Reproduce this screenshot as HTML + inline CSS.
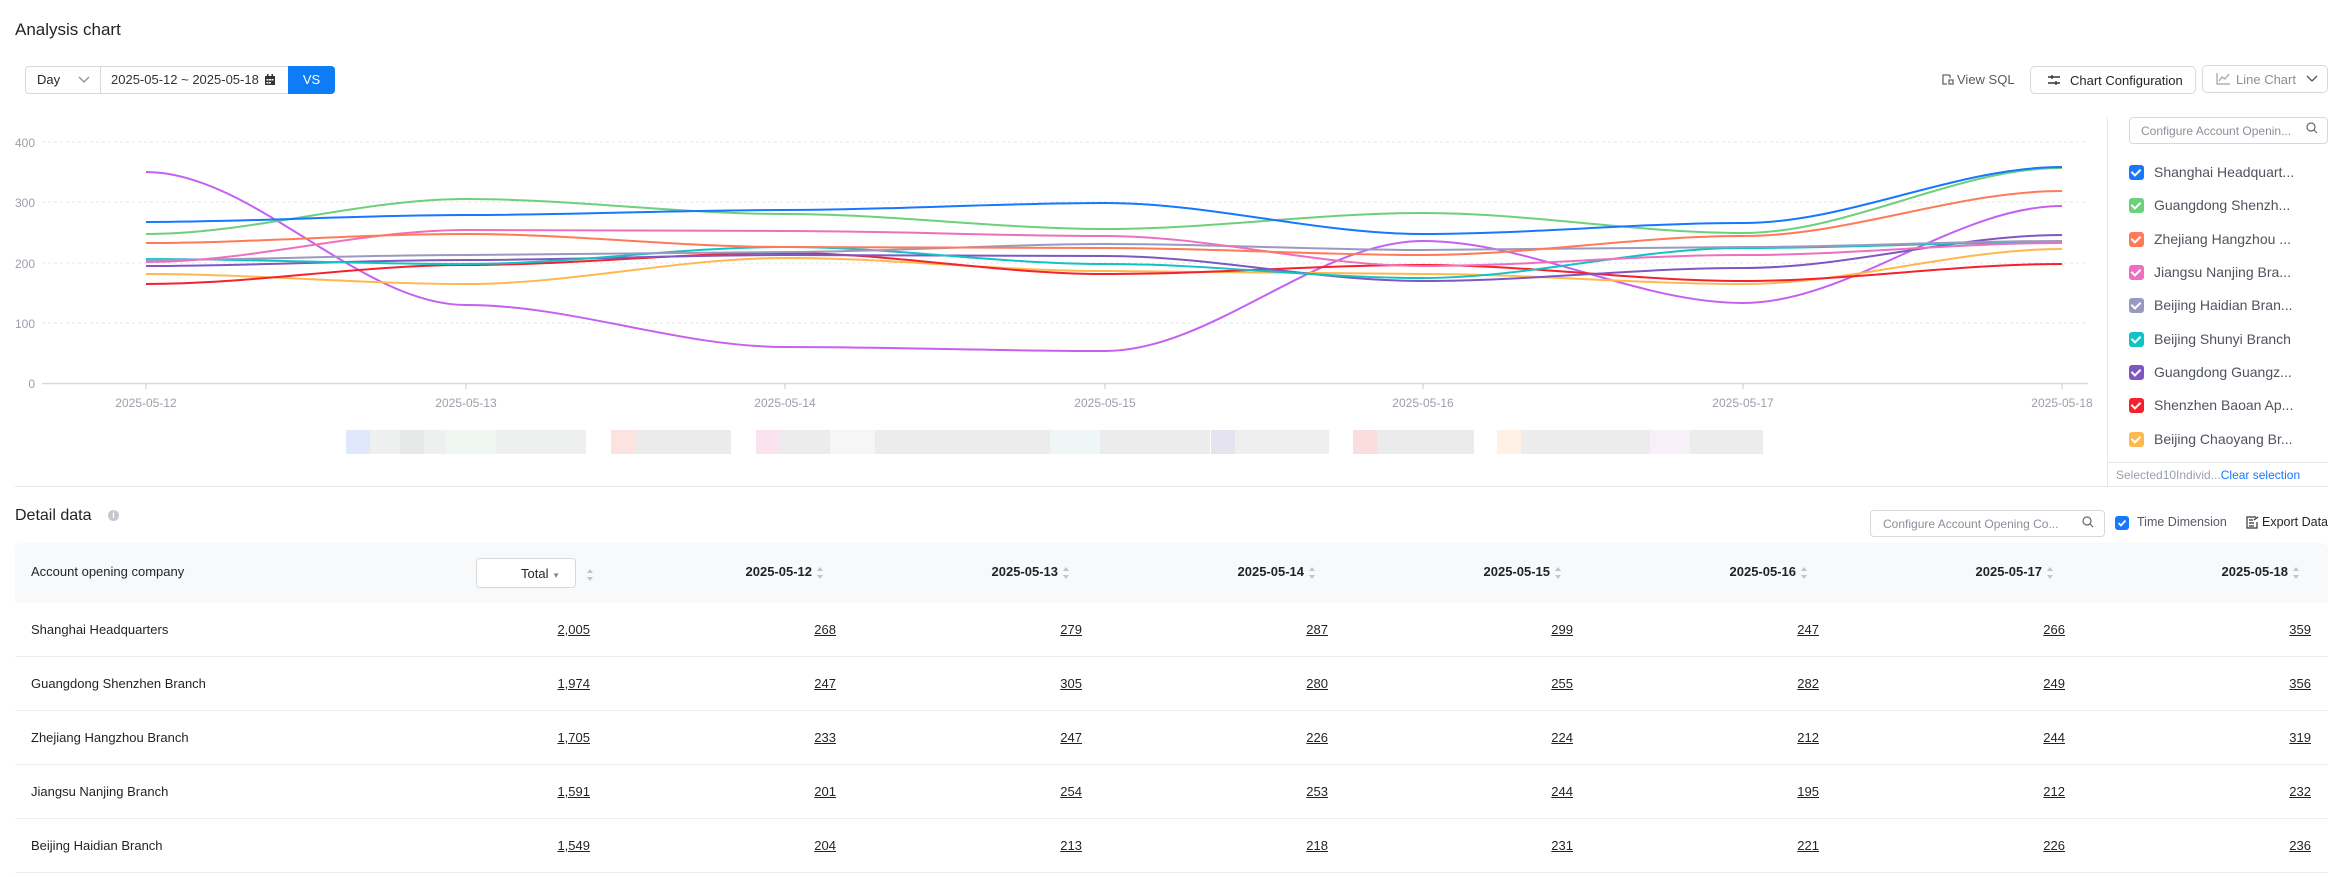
<!DOCTYPE html>
<html><head><meta charset="utf-8">
<style>
*{box-sizing:border-box;margin:0;padding:0}
body{width:2344px;height:877px;background:#fff;font-family:"Liberation Sans",sans-serif;color:#1f2329;position:relative;overflow:hidden}
.a{position:absolute;white-space:nowrap}
.btn{position:absolute;border:1px solid #d9d9d9;border-radius:5px;background:#fff;font-size:13px;display:flex;align-items:center}
.leg{position:absolute;left:2129px;font-size:14px;color:#4e535e;display:flex;align-items:center}
.cb{width:15px;height:15px;border-radius:3px;margin-right:10px;position:relative}
.cb:after{content:"";position:absolute;left:4px;top:2px;width:4px;height:7px;border:solid #fff;border-width:0 2px 2px 0;transform:rotate(45deg)}
.row{position:absolute;left:15px;width:2313px;height:54px;border-bottom:1px solid #eceef1;font-size:13px}
.row span{position:absolute;top:19px}
.row .n{text-decoration:underline;text-align:right}
.hd{position:absolute;top:564px;font-size:13px;font-weight:bold;color:#1f2329}
.sort{display:inline-block;width:7px;margin-left:5px;vertical-align:middle;position:relative;height:12px}
.sort:before,.sort:after{content:"";position:absolute;left:0;border-left:3.5px solid transparent;border-right:3.5px solid transparent}
.sort:before{top:0;border-bottom:4px solid #bfc4cc}
.sort:after{bottom:0;border-top:4px solid #bfc4cc}
</style></head><body>

<div class="a" style="left:15px;top:20px;font-size:17px;color:#1f2329">Analysis chart</div>

<div class="a" style="left:25px;top:66px;width:310px;height:28px;border:1px solid #d9d9d9;border-radius:4px"></div>
<div class="a" style="left:37px;top:72px;font-size:13px">Day</div>
<svg class="a" style="left:78px;top:75px" width="12" height="10"><path d="M1 2l5 5 5-5" fill="none" stroke="#8a8f99" stroke-width="1.3"/></svg>
<div class="a" style="left:100px;top:66px;width:1px;height:28px;background:#d9d9d9"></div>
<div class="a" style="left:111px;top:72px;font-size:13px;color:#333">2025-05-12 ~ 2025-05-18</div>
<svg class="a" style="left:264px;top:74px" width="12" height="12"><rect x="1" y="2" width="10" height="9" fill="#333"/><rect x="3" y="0" width="1.5" height="3" fill="#333"/><rect x="7.5" y="0" width="1.5" height="3" fill="#333"/><g fill="#fff"><rect x="2.5" y="5" width="2" height="1.5"/><rect x="5" y="5" width="2" height="1.5"/><rect x="7.5" y="5" width="2" height="1.5"/><rect x="2.5" y="8" width="2" height="1.5"/><rect x="5" y="8" width="2" height="1.5"/></g></svg>
<div class="a" style="left:288px;top:66px;width:47px;height:28px;background:#0e7cf5;border-radius:0 4px 4px 0;color:#fff;font-size:13px;text-align:center;line-height:28px">VS</div>

<svg class="a" style="left:1941px;top:73px" width="13" height="13"><path d="M9 2H2v9h4M9 2v3M8 7h4v4H8z" fill="none" stroke="#666" stroke-width="1.3"/></svg>
<div class="a" style="left:1957px;top:72px;font-size:13px;color:#555a66">View SQL</div>
<div class="btn" style="left:2030px;top:66px;width:166px;height:28px;padding-left:16px"><svg width="14" height="12" style="margin-right:9px"><path d="M1 3h12M1 9h12M5 1v4M9 7v4" stroke="#333" stroke-width="1.4" fill="none"/></svg>Chart Configuration</div>
<div class="btn" style="left:2202px;top:65px;width:126px;height:28px;padding-left:13px;color:#8a8f99"><svg width="14" height="12" style="margin-right:6px"><path d="M1 0v11h13M3 8l3-4 3 2 4-5" stroke="#9aa0aa" stroke-width="1.2" fill="none"/></svg>Line Chart<svg width="12" height="10" style="margin-left:10px"><path d="M1 2l5 5 5-5" fill="none" stroke="#555" stroke-width="1.3"/></svg></div>

<svg class="a" style="left:0;top:0" width="2100" height="470">
<g stroke="#e3e5e8" stroke-dasharray="3 3" stroke-width="1">
<line x1="42" y1="142" x2="2088" y2="142"/><line x1="42" y1="202" x2="2088" y2="202"/><line x1="42" y1="263" x2="2088" y2="263"/><line x1="42" y1="323" x2="2088" y2="323"/>
</g>
<line x1="42" y1="383.5" x2="2088" y2="383.5" stroke="#d6d8dc" stroke-width="1.5"/>
<g stroke="#ccc"><line x1="146" y1="384" x2="146" y2="389"/><line x1="466" y1="384" x2="466" y2="389"/><line x1="785" y1="384" x2="785" y2="389"/><line x1="1105" y1="384" x2="1105" y2="389"/><line x1="1423" y1="384" x2="1423" y2="389"/><line x1="1743" y1="384" x2="1743" y2="389"/><line x1="2062" y1="384" x2="2062" y2="389"/></g>
<g font-family="Liberation Sans" font-size="12" fill="#9aa0aa" text-anchor="end">
<text x="35" y="147">400</text><text x="35" y="207">300</text><text x="35" y="268">200</text><text x="35" y="328">100</text><text x="35" y="388">0</text>
</g>
<g font-family="Liberation Sans" font-size="12" fill="#9aa0aa" text-anchor="middle">
<text x="146" y="407">2025-05-12</text><text x="466" y="407">2025-05-13</text><text x="785" y="407">2025-05-14</text><text x="1105" y="407">2025-05-15</text><text x="1423" y="407">2025-05-16</text><text x="1743" y="407">2025-05-17</text><text x="2062" y="407">2025-05-18</text>
</g>
<g fill="none" stroke-width="2">
<path stroke="#c660f0" d="M146 172 C252 172 360 305 466 305 C572 305 679 347 785 347 C891 347 999 351 1105 351 C1211 351 1317 241 1423 241 C1529 241 1637 303 1743 303 C1849 303 1956 206 2062 206"/>
<path stroke="#ffb84d" d="M146 274 C252 274 360 284 466 284 C572 284 679 258 785 258 C891 258 999 271 1105 271 C1211 271 1317 274 1423 274 C1529 274 1637 284 1743 284 C1849 284 1956 249 2062 249"/>
<path stroke="#f5222d" d="M146 284 C252 284 360 265 466 265 C572 265 679 253 785 253 C891 253 999 274 1105 274 C1211 274 1317 265 1423 265 C1529 265 1637 281 1743 281 C1849 281 1956 264 2062 264"/>
<path stroke="#7e57c2" d="M146 266 C252 266 360 260 466 260 C572 260 679 255 785 255 C891 255 999 256 1105 256 C1211 256 1317 281 1423 281 C1529 281 1637 268 1743 268 C1849 268 1956 235 2062 235"/>
<path stroke="#13c2c2" d="M146 259 C252 259 360 264 466 264 C572 264 679 247 785 247 C891 247 999 264 1105 264 C1211 264 1317 278 1423 278 C1529 278 1637 248 1743 248 C1849 248 1956 242 2062 242"/>
<path stroke="#9a9ac0" d="M146 260 C252 260 360 255 466 255 C572 255 679 252 785 252 C891 252 999 244 1105 244 C1211 244 1317 250 1423 250 C1529 250 1637 247 1743 247 C1849 247 1956 241 2062 241"/>
<path stroke="#ee6fbf" d="M146 262 C252 262 360 230 466 230 C572 230 679 231 785 231 C891 231 999 236 1105 236 C1211 236 1317 266 1423 266 C1529 266 1637 255 1743 255 C1849 255 1956 243 2062 243"/>
<path stroke="#ff7a59" d="M146 243 C252 243 360 234 466 234 C572 234 679 247 785 247 C891 247 999 248 1105 248 C1211 248 1317 255 1423 255 C1529 255 1637 236 1743 236 C1849 236 1956 191 2062 191"/>
<path stroke="#6dd07a" d="M146 234 C252 234 360 199 466 199 C572 199 679 214 785 214 C891 214 999 229 1105 229 C1211 229 1317 213 1423 213 C1529 213 1637 233 1743 233 C1849 233 1956 168 2062 168"/>
<path stroke="#1677ff" d="M146 222 C252 222 360 215 466 215 C572 215 679 210 785 210 C891 210 999 203 1105 203 C1211 203 1317 234 1423 234 C1529 234 1637 223 1743 223 C1849 223 1956 167 2062 167"/>
</g>
<g>
<rect x="346" y="430" width="24" height="24" fill="#dfe7fb"/><rect x="370" y="430" width="216" height="24" fill="#eeefef"/><rect x="400" y="430" width="24" height="24" fill="#e6e7e7"/><rect x="446" y="430" width="50" height="24" fill="#f0f6f0"/>
<rect x="611" y="430" width="24" height="24" fill="#fde3df"/><rect x="635" y="430" width="96" height="24" fill="#ebebeb"/>
<rect x="756" y="430" width="24" height="24" fill="#f8e3ee"/><rect x="780" y="430" width="430" height="24" fill="#ececec"/><rect x="830" y="430" width="45" height="24" fill="#f6f6f6"/><rect x="1050" y="430" width="50" height="24" fill="#eef6f8"/>
<rect x="1211" y="430" width="24" height="24" fill="#e6e3f1"/><rect x="1235" y="430" width="94" height="24" fill="#efefef"/>
<rect x="1353" y="430" width="24" height="24" fill="#fbdddd"/><rect x="1377" y="430" width="97" height="24" fill="#ebebeb"/>
<rect x="1497" y="430" width="24" height="24" fill="#fff1e5"/><rect x="1521" y="430" width="242" height="24" fill="#ececec"/><rect x="1650" y="430" width="40" height="24" fill="#f7f0f9"/>
</g>
</svg>

<div class="a" style="left:2107px;top:117px;width:1px;height:369px;background:#e6e8eb"></div>
<div class="a" style="left:15px;top:486px;width:2313px;height:1px;background:#e6e8eb"></div>

<div class="a" style="left:2129px;top:117px;width:199px;height:27px;border:1px solid #d9d9d9;border-radius:4px;font-size:12px;color:#8a8f99;padding:6px 0 0 11px">Configure Account Openin...</div>
<svg class="a" style="left:2306px;top:122px" width="12" height="12"><circle cx="5" cy="5" r="4" fill="none" stroke="#666" stroke-width="1.2"/><path d="M8 8l3 3" stroke="#666" stroke-width="1.2"/></svg>
<div class="leg" style="top:164px"><div class="cb" style="background:#1677ff"></div>Shanghai Headquart...</div>
<div class="leg" style="top:197px"><div class="cb" style="background:#6dd07a"></div>Guangdong Shenzh...</div>
<div class="leg" style="top:231px"><div class="cb" style="background:#ff7a59"></div>Zhejiang Hangzhou ...</div>
<div class="leg" style="top:264px"><div class="cb" style="background:#ee6fbf"></div>Jiangsu Nanjing Bra...</div>
<div class="leg" style="top:297px"><div class="cb" style="background:#9a9ac0"></div>Beijing Haidian Bran...</div>
<div class="leg" style="top:331px"><div class="cb" style="background:#13c2c2"></div>Beijing Shunyi Branch</div>
<div class="leg" style="top:364px"><div class="cb" style="background:#7e57c2"></div>Guangdong Guangz...</div>
<div class="leg" style="top:397px"><div class="cb" style="background:#f5222d"></div>Shenzhen Baoan Ap...</div>
<div class="leg" style="top:431px"><div class="cb" style="background:#ffb84d"></div>Beijing Chaoyang Br...</div>
<div class="a" style="left:2107px;top:462px;width:221px;height:1px;background:#e6e8eb"></div>
<div class="a" style="left:2116px;top:468px;font-size:12px;color:#9aa0aa">Selected10Individ...<span style="color:#1677ff">Clear selection</span></div>

<div class="a" style="left:15px;top:507px;font-size:16px">Detail data</div>
<div class="a" style="left:108px;top:510px;width:11px;height:11px;border-radius:50%;background:#c4c8ce;color:#fff;font-size:9px;text-align:center;line-height:11px;font-weight:bold">i</div>
<div class="a" style="left:1870px;top:510px;width:235px;height:27px;border:1px solid #d9d9d9;border-radius:4px;font-size:12px;color:#8a8f99;padding:6px 0 0 12px">Configure Account Opening Co...</div>
<svg class="a" style="left:2082px;top:516px" width="12" height="12"><circle cx="5" cy="5" r="4" fill="none" stroke="#666" stroke-width="1.2"/><path d="M8 8l3 3" stroke="#666" stroke-width="1.2"/></svg>
<div class="a" style="left:2115px;top:516px;width:14px;height:14px;border-radius:3px;background:#1677ff"></div>
<svg class="a" style="left:2115px;top:516px" width="14" height="14"><path d="M3.5 7l2.5 2.5 4.5-5" stroke="#fff" stroke-width="1.8" fill="none"/></svg>
<div class="a" style="left:2137px;top:515px;font-size:12.5px;color:#555a66">Time Dimension</div>
<svg class="a" style="left:2246px;top:516px" width="13" height="13"><path d="M10 1H1v11h10V6M3 4h4M3 7h5M3 10h5M8 4l4-3" stroke="#333" stroke-width="1.2" fill="none"/></svg>
<div class="a" style="left:2262px;top:515px;font-size:12.5px;color:#1f2329">Export Data</div>

<div class="a" style="left:15px;top:543px;width:2313px;height:60px;background:#f8f9fa;border-radius:6px 6px 0 0"></div>
<div class="a" style="left:31px;top:564px;font-size:13px">Account opening company</div>
<div class="a" style="left:476px;top:558px;width:100px;height:30px;border:1px solid #d9d9d9;border-radius:4px;background:#fff;font-size:13px;padding:7px 0 0 44px">Total <span style="font-size:8px;color:#888">▼</span></div>
<div class="a" style="left:582px;top:566px"><span class="sort"></span></div>
<div class="hd" style="right:1520px">2025-05-12<span class="sort"></span></div>
<div class="hd" style="right:1274px">2025-05-13<span class="sort"></span></div>
<div class="hd" style="right:1028px">2025-05-14<span class="sort"></span></div>
<div class="hd" style="right:782px">2025-05-15<span class="sort"></span></div>
<div class="hd" style="right:536px">2025-05-16<span class="sort"></span></div>
<div class="hd" style="right:290px">2025-05-17<span class="sort"></span></div>
<div class="hd" style="right:44px">2025-05-18<span class="sort"></span></div>

<div class="row" style="top:603px"><span style="left:16px">Shanghai Headquarters</span><span class="n" style="right:1738px">2,005</span><span class="n" style="right:1492px">268</span><span class="n" style="right:1246px">279</span><span class="n" style="right:1000px">287</span><span class="n" style="right:755px">299</span><span class="n" style="right:509px">247</span><span class="n" style="right:263px">266</span><span class="n" style="right:17px">359</span></div>
<div class="row" style="top:657px"><span style="left:16px">Guangdong Shenzhen Branch</span><span class="n" style="right:1738px">1,974</span><span class="n" style="right:1492px">247</span><span class="n" style="right:1246px">305</span><span class="n" style="right:1000px">280</span><span class="n" style="right:755px">255</span><span class="n" style="right:509px">282</span><span class="n" style="right:263px">249</span><span class="n" style="right:17px">356</span></div>
<div class="row" style="top:711px"><span style="left:16px">Zhejiang Hangzhou Branch</span><span class="n" style="right:1738px">1,705</span><span class="n" style="right:1492px">233</span><span class="n" style="right:1246px">247</span><span class="n" style="right:1000px">226</span><span class="n" style="right:755px">224</span><span class="n" style="right:509px">212</span><span class="n" style="right:263px">244</span><span class="n" style="right:17px">319</span></div>
<div class="row" style="top:765px"><span style="left:16px">Jiangsu Nanjing Branch</span><span class="n" style="right:1738px">1,591</span><span class="n" style="right:1492px">201</span><span class="n" style="right:1246px">254</span><span class="n" style="right:1000px">253</span><span class="n" style="right:755px">244</span><span class="n" style="right:509px">195</span><span class="n" style="right:263px">212</span><span class="n" style="right:17px">232</span></div>
<div class="row" style="top:819px"><span style="left:16px">Beijing Haidian Branch</span><span class="n" style="right:1738px">1,549</span><span class="n" style="right:1492px">204</span><span class="n" style="right:1246px">213</span><span class="n" style="right:1000px">218</span><span class="n" style="right:755px">231</span><span class="n" style="right:509px">221</span><span class="n" style="right:263px">226</span><span class="n" style="right:17px">236</span></div>
</body></html>
